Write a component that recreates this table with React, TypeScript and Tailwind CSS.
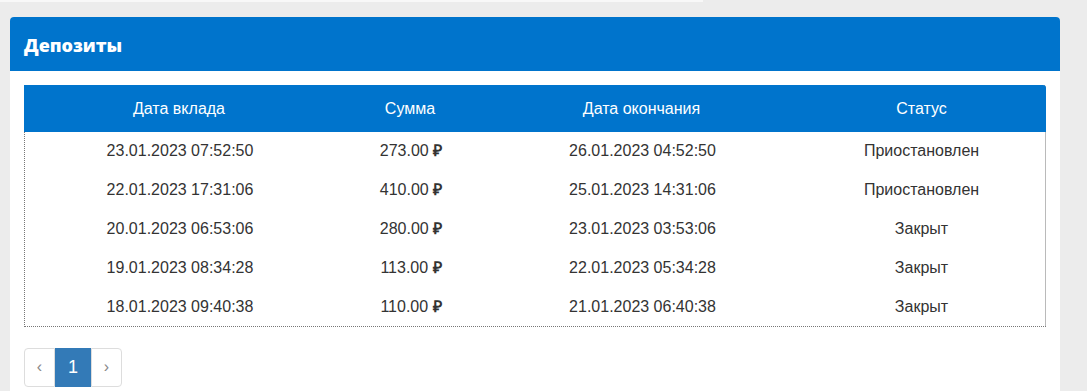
import React from "react";

const rows = [
  ["23.01.2023 07:52:50", "273.00", "26.01.2023 04:52:50", "Приостановлен"],
  ["22.01.2023 17:31:06", "410.00", "25.01.2023 14:31:06", "Приостановлен"],
  ["20.01.2023 06:53:06", "280.00", "23.01.2023 03:53:06", "Закрыт"],
  ["19.01.2023 08:34:28", "113.00", "22.01.2023 05:34:28", "Закрыт"],
  ["18.01.2023 09:40:38", "110.00", "21.01.2023 06:40:38", "Закрыт"],
];

const cols = "grid grid-cols-[310px_152px_311px_1fr]";

export default function App() {
  return (
    <div className="h-[391px] w-full overflow-hidden bg-[#ececec] font-['Liberation_Sans',Arial,sans-serif]">
      <div className="h-[2px] w-[703px] bg-[#f8f8f8]" />
      <div className="ml-[10px] mt-[15px] w-[1050px] bg-white h-[400px] rounded-t-[4px]">
        <div className="h-[54px] flex items-center px-[14px] bg-[#0074cc] rounded-t-[4px]">
          <h2 className="text-white text-[18px] font-extrabold font-['Open_Sans',sans-serif] leading-none pt-[1px]">
            Депозиты
          </h2>
        </div>
        <div className="px-[14px] pt-[14px]">
          <div className="border border-dotted border-[#777] rounded-tr-[3px]">
            <div className={`${cols} h-[47px] bg-[#0074cc] text-white text-[16px] items-center text-center -mt-px -mx-px rounded-tr-[3px]`}>
              <div>Дата вклада</div>
              <div>Сумма</div>
              <div>Дата окончания</div>
              <div>Статус</div>
            </div>
            {rows.map((r, i) => (
              <div key={i} className={`${cols} h-[38.8px] items-center text-center text-[16px] text-[#333]`}>
                <div>{r[0]}</div>
                <div>{r[1]} <span className="font-bold">₽</span></div>
                <div>{r[2]}</div>
                <div>{r[3]}</div>
              </div>
            ))}
          </div>
          <div className="mt-[21px] flex h-[39px] w-[98px] text-[18px]">
            <div className="w-[31px] flex items-center justify-center border border-[#ddd] rounded-l-[4px] text-[#888] text-[16px]">‹</div>
            <div className="w-[36px] flex items-center justify-center bg-[#337ab7] text-white">1</div>
            <div className="w-[31px] flex items-center justify-center border border-[#ddd] rounded-r-[4px] text-[#888] text-[16px]">›</div>
          </div>
        </div>
      </div>
    </div>
  );
}
